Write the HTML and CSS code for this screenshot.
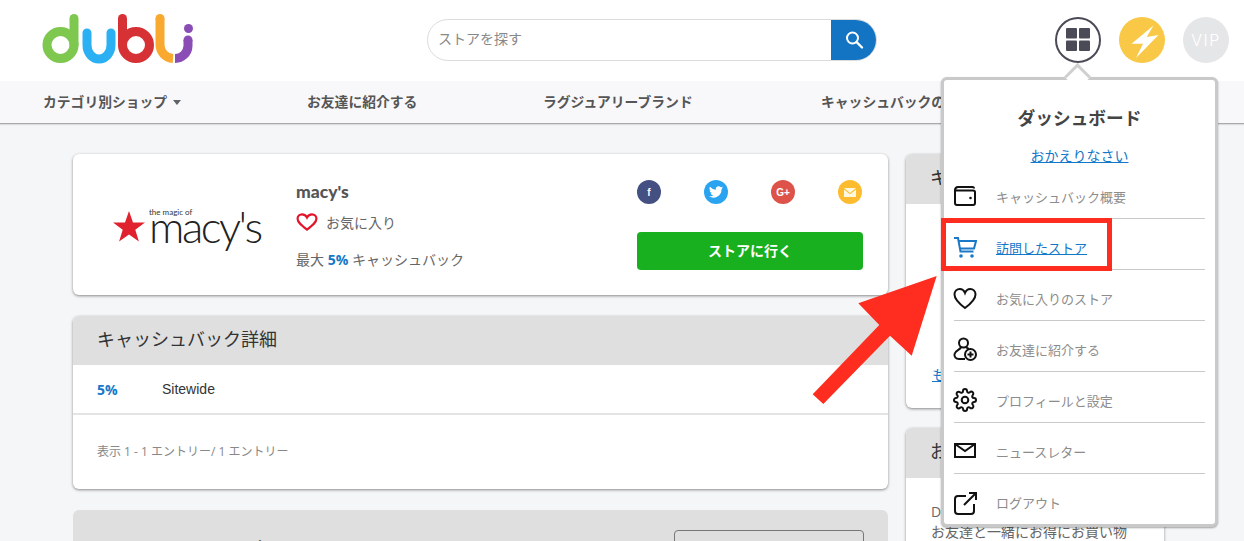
FILE: index.html
```html
<!DOCTYPE html>
<html lang="ja">
<head>
<meta charset="utf-8">
<title>macy's</title>
<link rel="stylesheet" href="styles.css">
</head>
<body>
<header class="top">
  <svg class="logo" width="200" height="81" viewBox="0 0 200 81" fill="none" stroke-width="9" stroke-linecap="round">
    <g stroke="#7ec850"><circle cx="60.5" cy="45" r="13.5"/><path d="M74 18.5V45"/></g>
    <path stroke="#2cb0f4" d="M87 33V45a11.500 13.500 0 0 0 24 0V33"/>
    <g stroke="#d63135"><circle cx="136" cy="45" r="13.500"/><path d="M122.500 18.500V45"/></g>
    <path stroke="#f9a92f" stroke-linecap="butt" d="M160 18.500V44a14 14 0 0 0 13 14.500" />
    <circle cx="160" cy="18.500" r="4.500" fill="#f9a92f" stroke="none"/>
    <path stroke="#8a4db5" stroke-linecap="butt" d="M188 40V46a13 13 0 0 1-13 12.500"/>
    <circle cx="188.500" cy="28.500" r="4.500" fill="#8a4db5" stroke="none"/>
    <circle cx="188" cy="40" r="4.500" fill="#8a4db5" stroke="none"/>
  </svg>
  <form class="search">
    <div class="search-field">ストアを探す</div>
    <div class="search-btn">
      <svg width="20" height="20" viewBox="0 0 20 20" fill="none" stroke="#fff" stroke-width="2"><circle cx="8.500" cy="8" r="5.500"/><path d="M12.500 12l5.500 5.500" stroke-linecap="round" stroke-width="2.400"/></svg>
    </div>
  </form>
  <div class="top-icons">
    <div class="round round-dash">
      <svg width="24" height="23" viewBox="0 0 24 23" fill="#4b4b57"><rect width="11" height="10.500" rx="1"/><rect x="13" width="11" height="10.500" rx="1"/><rect y="12.500" width="11" height="10.500" rx="1"/><rect x="13" y="12.500" width="11" height="10.500" rx="1"/></svg>
    </div>
    <div class="round round-bolt">
      <svg width="46" height="46" viewBox="0 0 46 46" fill="#fff"><path d="M34.500 8.500 12.500 26.700H24L17 41 39.500 18 27.700 20z"/></svg>
    </div>
    <div class="round round-vip">VIP</div>
  </div>
</header>
<nav class="menu">
  <a class="menu-item menu-first">カテゴリ別ショップ <span class="caret"></span></a>
  <a class="menu-item menu-second">お友達に紹介する</a>
  <a class="menu-item menu-third">ラグジュアリーブランド</a>
  <a class="menu-item">キャッシュバックの仕組み</a>
</nav>
<main class="content">
  <div class="col-left">
    <section class="card store">
      <div class="brand">
        <svg width="34" height="34" viewBox="0 0 34 34"><polygon fill="#e0222f" points="17,1 21,12.500 33,12.500 23.300,19.800 26.900,31.500 17,24.500 7.100,31.500 10.700,19.800 1,12.500 13,12.500"/></svg>
        <div class="brand-words">
          <span class="brand-tag">the magic of</span>
          <span class="brand-name">macy's</span>
        </div>
      </div>
      <div class="store-info">
        <h1 class="store-name">macy's</h1>
        <div class="fav">
          <svg width="22" height="18" viewBox="0 0 24 20" fill="none" stroke="#e2152b" stroke-width="2.400"><path d="M12 18.500C6 14 1.500 10.500 1.500 6.500 1.500 3.500 3.800 1.500 6.500 1.500 9 1.500 11 3 12 5 13 3 15 1.500 17.500 1.500 20.200 1.500 22.500 3.500 22.500 6.500 22.500 10.500 18 14 12 18.500z"/></svg>
          <span>お気に入り</span>
        </div>
        <p class="max">最大 <b>5%</b> キャッシュバック</p>
      </div>
      <div class="store-actions">
        <div class="shares">
          <span class="share s-fb">f</span>
          <span class="share s-tw"><svg width="14" height="12" viewBox="0 0 24 20" fill="#fff"><path d="M24 2.400a10 10 0 0 1-2.800.8A5 5 0 0 0 23.300.500a10 10 0 0 1-3.100 1.200A4.900 4.900 0 0 0 11.800 6.200 14 14 0 0 1 1.700 1a4.900 4.900 0 0 0 1.500 6.600 4.900 4.900 0 0 1-2.200-.6 4.900 4.900 0 0 0 3.900 4.900 5 5 0 0 1-2.200.1 4.900 4.900 0 0 0 4.600 3.400A9.900 9.900 0 0 1 0 17.400 14 14 0 0 0 21.500 5c1-.7 1.900-1.600 2.500-2.600z"/></svg></span>
          <span class="share s-gp">G+</span>
          <span class="share s-ml"><svg width="12" height="9" viewBox="0 0 12 9" fill="#fff8e0"><path d="M0 0h12L6 5z"/><path d="M0 1.500V9h12V1.500L6 6.300z"/></svg></span>
        </div>
        <a class="go">ストアに行く</a>
      </div>
    </section>
    <section class="card detail">
      <h2 class="card-head">キャッシュバック詳細</h2>
      <div class="rate-row"><b>5%</b><span>Sitewide</span></div>
      <p class="entries">表示 1 - 1 エントリー/ 1 エントリー</p>
    </section>
    <section class="card other">
      <span class="other-title">Hailey ショップ</span>
      <span class="other-btn"></span>
    </section>
  </div>
  <aside class="col-right">
    <section class="card side-one">
      <h2 class="card-head">キャッシュバックの仕組み</h2>
      <a class="more">もっと見る</a>
    </section>
    <section class="card side-two">
      <h2 class="card-head">お友達に紹介する</h2>
      <p class="side-text">Dubli<br>お友達と一緒にお得にお買い物</p>
    </section>
  </aside>
</main>

<div class="panel">
  <span class="panel-tip"></span>
  <h3 class="panel-title">ダッシュボード</h3>
  <a class="panel-hello">おかえりなさい</a>
  <ul class="panel-list">
    <li class="panel-row">
      <svg width="24" height="24" viewBox="0 0 24 24" fill="none" stroke="#111" stroke-width="2"><path d="M2 6.500C2 4 3 3 5 3h14.500c1 0 1.500 .5 1.500 1.500M2 6.500V19c0 1 1 2 2 2h16c1 0 2-1 2-2V8c0-1-1-1.500-2-1.500z"/><circle cx="17.500" cy="14" r="1.300" fill="#111" stroke="none"/></svg>
      <span>キャッシュバック概要</span>
    </li>
    <li class="panel-row panel-active">
      <svg width="24" height="24" viewBox="0 0 24 24" fill="none" stroke="#1a78c8" stroke-width="2"><path d="M1 3h4l2.500 13.500h13M5.500 6H23l-2 7.500H7"/><circle cx="8" cy="21" r="1.800" fill="#1a78c8" stroke="none"/><circle cx="19" cy="21" r="1.800" fill="#1a78c8" stroke="none"/></svg>
      <span>訪問したストア</span>
    </li>
    <li class="panel-row">
      <svg width="24" height="24" viewBox="0 0 24 24" fill="none" stroke="#111" stroke-width="2"><path d="M12 22C6 17.500 1.500 13.500 1.500 8.500 1.500 5 4 3 6.800 3 9 3 11 4.500 12 7c1-2.500 3-4 5.200-4C20 3 22.500 5 22.500 8.500 22.500 13.500 18 17.500 12 22z"/></svg>
      <span>お気に入りのストア</span>
    </li>
    <li class="panel-row">
      <svg width="24" height="24" viewBox="0 0 24 24" fill="none" stroke="#111" stroke-width="2"><circle cx="10.500" cy="6" r="4.500"/><path d="M8 10C7.500 13 2 13.500 1.500 17 1 20 3 22 6 22h6"/><path d="M13 10c1 1 2 1.500 3 2"/><circle cx="17.500" cy="17.500" r="5.500"/><path d="M17.500 14.500v6M14.500 17.500h6"/></svg>
      <span>お友達に紹介する</span>
    </li>
    <li class="panel-row">
      <svg width="24" height="24" viewBox="0 0 24 24" fill="none" stroke="#111" stroke-width="2" stroke-linejoin="round"><circle cx="12" cy="12" r="3.300"/><path d="M19.400 15a1.650 1.650 0 0 0 .33 1.820l.06.06a2 2 0 0 1 0 2.830 2 2 0 0 1-2.830 0l-.06-.06a1.650 1.650 0 0 0-1.820-.33 1.650 1.650 0 0 0-1 1.510V21a2 2 0 0 1-2 2 2 2 0 0 1-2-2v-.09A1.650 1.650 0 0 0 9 19.400a1.650 1.650 0 0 0-1.820.33l-.06.06a2 2 0 0 1-2.830 0 2 2 0 0 1 0-2.830l.06-.06a1.650 1.650 0 0 0 .33-1.820 1.650 1.650 0 0 0-1.510-1H3a2 2 0 0 1-2-2 2 2 0 0 1 2-2h.09A1.650 1.650 0 0 0 4.600 9a1.650 1.650 0 0 0-.33-1.820l-.06-.06a2 2 0 0 1 0-2.830 2 2 0 0 1 2.830 0l.06.06a1.650 1.650 0 0 0 1.820.33H9a1.650 1.650 0 0 0 1-1.510V3a2 2 0 0 1 2-2 2 2 0 0 1 2 2v.09a1.650 1.650 0 0 0 1 1.510 1.650 1.650 0 0 0 1.820-.33l.06-.06a2 2 0 0 1 2.830 0 2 2 0 0 1 0 2.830l-.06.06a1.650 1.650 0 0 0-.33 1.820V9a1.650 1.650 0 0 0 1.510 1H21a2 2 0 0 1 2 2 2 2 0 0 1-2 2h-.09a1.650 1.650 0 0 0-1.510 1z"/></svg>
      <span>プロフィールと設定</span>
    </li>
    <li class="panel-row">
      <svg width="24" height="24" viewBox="0 0 24 24" fill="none" stroke="#111" stroke-width="2"><rect x="2" y="5" width="20" height="13"/><path d="M2 5l10 7 10-7"/></svg>
      <span>ニュースレター</span>
    </li>
    <li class="panel-row">
      <svg width="24" height="24" viewBox="0 0 24 24" fill="none" stroke="#111" stroke-width="2"><path d="M13 5H5C3 5 2 6 2 8v12c0 2 1 3 3 3h13c2 0 3-1 3-3v-7"/><path d="M11 14 22 3M16 2h7v7"/></svg>
      <span>ログアウト</span>
    </li>
  </ul>
</div>

<div class="callout-box"></div>
<svg class="callout-arrow" width="140" height="140" viewBox="0 0 140 140"><polygon fill="#ff2d1f" points="131.700,6 53.300,33.300 74.300,55 7.700,124.300 18.300,134 85,65.700 106.700,85.700"/></svg>
</body>
</html>
```
FILE: styles.css
```css
* { box-sizing: border-box; }
html, body { margin: 0; padding: 0; }
body {
  height: 541px;
  overflow: hidden;
  position: relative;
  background: #f5f6f8;
  font-family: "Open Sans", "Noto Sans CJK JP", sans-serif;
  color: #555;
}
h1, h2, h3, p, ul { margin: 0; padding: 0; font-weight: normal; }
ul { list-style: none; }

.top {
  height: 81px;
  background: #fff;
  display: flex;
  align-items: center;
  position: relative;
}
.logo { flex: none; width: 200px; }
.search {
  margin-left: 227px;
  margin-top: -2px;
  width: 450px;
  height: 42px;
  display: flex;
  border: 1px solid #dcdcdc;
  border-radius: 21px;
  overflow: hidden;
}
.search-field {
  flex: 1;
  padding-left: 10px;
  font-size: 14px;
  line-height: 38px;
  color: #888;
}
.search-btn {
  width: 45px;
  background: #1474c4;
  display: flex;
  align-items: center;
  justify-content: center;
}
.top-icons {
  margin-left: auto;
  margin-right: 15px;
  margin-top: -2px;
  display: flex;
  gap: 18px;
}
.round {
  width: 46px;
  height: 46px;
  border-radius: 50%;
  display: flex;
  align-items: center;
  justify-content: center;
}
.round-dash { border: 2px solid #4b4b57; background: #fff; }
.round-bolt { background: #f8c846; }
.round-vip {
  background: #e5e6e8;
  color: #fff;
  font-family: "Inter", sans-serif;
  font-weight: 300;
  font-size: 16px;
  letter-spacing: 1.500px;
}

.menu {
  height: 43px;
  background: #f8f8fa;
  border-bottom: 1px solid #a8aaae;
  box-shadow: 0 1px 1px rgba(0, 0, 0, .1);
  display: flex;
  align-items: center;
  padding: 0 0 2px 43px;
  font-size: 13.800px;
  font-weight: 700;
  color: #555;
  white-space: nowrap;
}
.menu-first { width: 264px; }
.menu-second { width: 236px; }
.menu-third { width: 278px; }
.caret {
  display: inline-block;
  margin-left: 2px;
  vertical-align: 2px;
  border-left: 4px solid transparent;
  border-right: 4px solid transparent;
  border-top: 5px solid #5f6368;
}

.content {
  display: flex;
  gap: 18px;
  padding: 30px 0 0 73px;
  align-items: flex-start;
}
.col-left { width: 815px; flex: none; display: flex; flex-direction: column; gap: 21px; }
.col-right { width: 258px; flex: none; display: flex; flex-direction: column; gap: 20px; }
.card {
  background: #fff;
  border-radius: 6px;
  box-shadow: 0 1px 3px rgba(0, 0, 0, .45);
  overflow: hidden;
}
.card-head {
  height: 49px;
  background: #dfdfdf;
  padding-left: 24px;
  font-size: 18px;
  line-height: 46px;
  color: #333;
  white-space: nowrap;
  overflow: hidden;
}
.col-right .card-head { height: 50px; }

.store { height: 141px; display: flex; }
.brand {
  width: 223px;
  padding: 54px 0 0 39px;
  display: flex;
  align-items: flex-start;
}
.brand svg { flex: none; margin-top: 2px; }
.brand-words { display: flex; flex-direction: column; margin-left: 3px; margin-top: 1px; }
.brand-tag { font-family: "Lato", sans-serif; font-size: 8px; line-height: 7px; color: #333; }
.brand-name {
  font-family: "Lato", sans-serif;
  font-weight: 300;
  font-size: 44px;
  line-height: 34px;
  letter-spacing: -2.500px;
  color: #222;
  margin-top: -7px;
}
.store-info { width: 341px; padding-top: 27px; }
.store-name { font-family: "Lato", sans-serif; font-weight: 900; font-size: 17.500px; line-height: 22px; color: #555; }
.fav { display: flex; align-items: center; gap: 8px; margin-top: 8px; font-size: 14px; color: #666; height: 22px; }
.max { margin-top: 17px; font-size: 14px; line-height: 20px; color: #666; }
.max b { color: #1478c8; font-family: "Open Sans", sans-serif; }
.store-actions { width: 226px; padding-top: 26px; }
.shares { display: flex; justify-content: space-between; padding-right: 1px; }
.share {
  width: 24px;
  height: 24px;
  border-radius: 50%;
  display: flex;
  align-items: center;
  justify-content: center;
  color: #fff;
  font-size: 10px;
  font-weight: 700;
  font-family: "Liberation Sans", sans-serif;
}
.s-fb { background: #435081; }
.s-tw { background: #2aa4f0; }
.s-gp { background: #dd5349; }
.s-ml { background: #fdbc2f; }
.go {
  display: block;
  margin-top: 28px;
  height: 38px;
  background: #19b01f;
  border-radius: 4px;
  color: #fff;
  font-size: 14px;
  font-weight: 700;
  line-height: 37px;
  text-align: center;
}

.detail { height: 173px; }
.rate-row {
  height: 50px;
  border-bottom: 2px solid #e4e4e4;
  display: flex;
  align-items: center;
  padding-left: 24px;
  font-family: "Liberation Sans", sans-serif;
  font-size: 14px;
  color: #333;
}
.rate-row b { width: 65px; color: #1478c8; font-family: "Open Sans", sans-serif; font-size: 14px; }
.entries { padding: 28px 0 0 24px; font-size: 12px; line-height: 18px; color: #888; }

.other {
  height: 60px;
  background: #dfdfdf;
  position: relative;
  display: flex;
  padding: 27px 24px 0 89px;
  justify-content: space-between;
  box-shadow: none;
}
.other-title { font-size: 14px; line-height: 20px; color: #333; }
.other-btn { width: 190px; height: 40px; margin-top: -7px; border: 1px solid #777; border-radius: 4px; }

.side-one { height: 254px; position: relative; }
.more { position: absolute; left: 26px; bottom: 24px; font-size: 14px; color: #1478c8; text-decoration: underline; }
.side-two { height: 200px; }
.side-text { padding: 24px 0 0 25px; font-size: 14px; line-height: 20px; color: #666; white-space: nowrap; }

.panel {
  position: absolute;
  left: 941px;
  top: 77px;
  width: 277px;
  height: 450px;
  background: #fff;
  border: 3px solid #c9c9c9;
  border-radius: 6px;
  box-shadow: 0 1px 2px rgba(0, 0, 0, .35);
  padding: 0 10px;
  z-index: 2;
}
.panel-tip {
  position: absolute;
  left: 124px;
  top: -13px;
  width: 19px;
  height: 19px;
  background: #fff;
  border-left: 3px solid #d0d0d0;
  border-top: 3px solid #d0d0d0;
  transform: rotate(45deg);
}
.panel-title { margin-top: 25px; text-align: center; font-size: 17.700px; font-weight: 700; line-height: 26px; color: #444; }
.panel-hello {
  display: block;
  margin-top: 15px;
  text-align: center;
  font-size: 14px;
  line-height: 20px;
  color: #1478c8;
  text-decoration: underline;
}
.panel-list { margin-top: 2px; }
.panel-row {
  height: 51px;
  display: flex;
  align-items: center;
  gap: 19px;
  border-bottom: 1px solid #c9c9c9;
  font-size: 13px;
  color: #8c8c8c;
  padding-top: 6px;
}
.panel-row:last-child { border-bottom: 0; }
.panel-row svg { flex: none; margin-left: -1px; }
.panel-active { color: #1478c8; }
.panel-active span { text-decoration: underline; }

.callout-box {
  position: absolute;
  left: 941px;
  top: 218px;
  width: 171px;
  height: 53px;
  border: 5px solid #ff2d1f;
  z-index: 3;
}
.callout-arrow { position: absolute; left: 805px; top: 270px; z-index: 3; }
```
